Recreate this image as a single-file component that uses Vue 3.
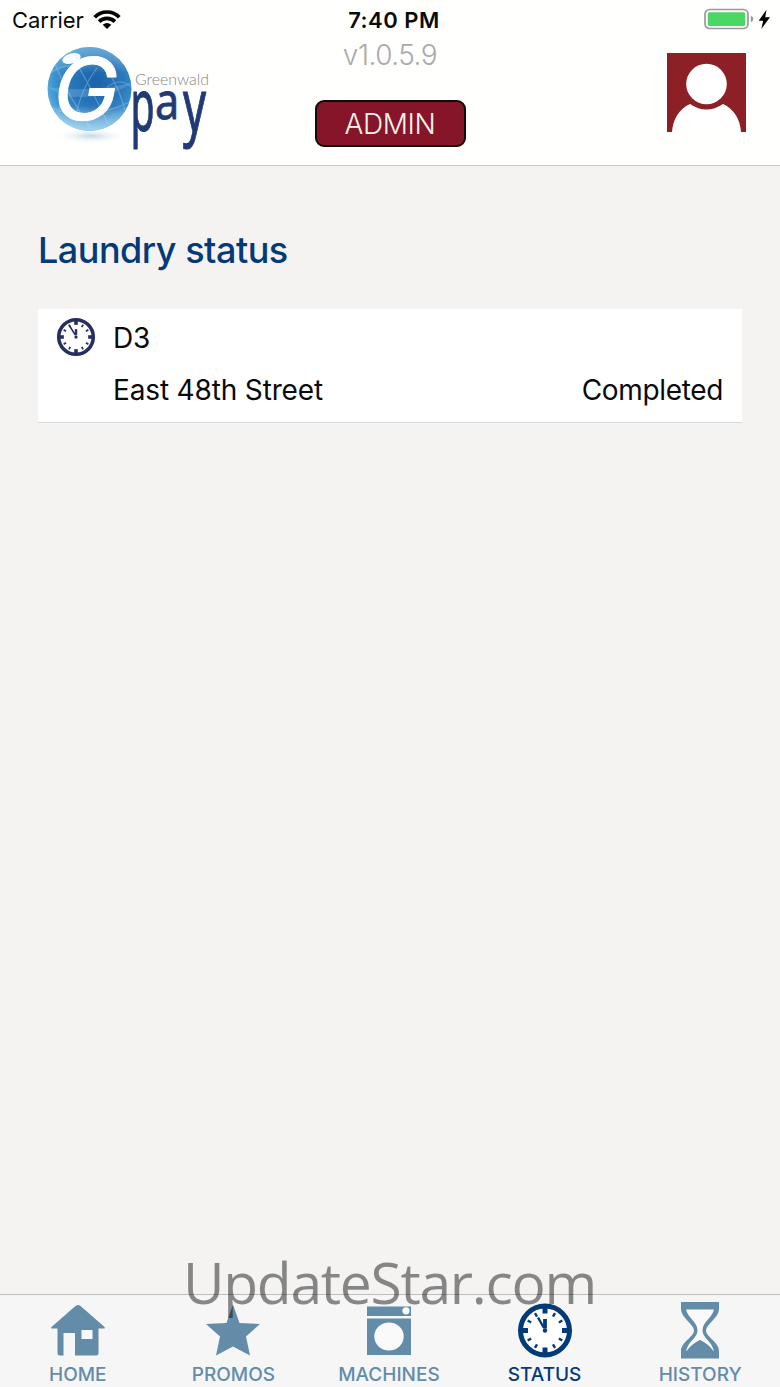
<template>
  <div class="app">
    <header class="header">
      <div class="status-bar">
        <div class="carrier">
          <span>Carrier</span>
          <svg class="wifi" width="28" height="20" viewBox="0 0 28 20">
            <g fill="none" stroke="#000" stroke-width="3.7">
              <path d="M1.7 7.3C8.2 .2 19.8 .2 26.3 7.3" />
              <path d="M6.1 11.6C10.4 7.3 17.6 7.3 21.9 11.6" />
            </g>
            <path d="M9.7 14.8Q14 11.3 18.3 14.8L14 19Z" />
          </svg>
        </div>
        <span class="time">7:40 PM</span>
        <svg class="battery" width="70" height="26" viewBox="0 0 70 26">
          <rect x="1" y="2.5" width="43" height="19" rx="4.5" fill="#fff" stroke="#999" stroke-width="1.7" />
          <rect x="3.8" y="5.2" width="37.4" height="13.8" rx="2" fill="#4bd763" />
          <path d="M46.8 8.7Q49.3 9.5 49.3 12.1T46.8 15.5Z" fill="#999" />
          <path d="M62.5 2.7L54.7 13.7H59.2L57.3 22L66 10.3H61.2Z" />
        </svg>
      </div>

      <div class="header-row">
        <svg class="logo" width="170" height="110" viewBox="0 0 170 110">
          <defs>
            <radialGradient id="globe" cx=".58" cy=".42" r=".62">
              <stop offset="0" stop-color="#1c63a8" />
              <stop offset=".5" stop-color="#2a78bb" />
              <stop offset=".82" stop-color="#3f94cf" />
              <stop offset="1" stop-color="#5fb0dd" />
            </radialGradient>
            <radialGradient id="shade">
              <stop offset="0" stop-color="#a9c6d6" stop-opacity=".7" />
              <stop offset="1" stop-color="#fff" stop-opacity="0" />
            </radialGradient>
            <linearGradient id="shine" x1="0" y1="0" x2="0" y2="1">
              <stop offset="0" stop-color="#9ed5ef" stop-opacity=".45" />
              <stop offset=".3" stop-color="#fff" stop-opacity="0" />
              <stop offset=".7" stop-color="#fff" stop-opacity="0" />
              <stop offset="1" stop-color="#b6e4f6" stop-opacity=".75" />
            </linearGradient>
            <clipPath id="ball"><circle cx="44.5" cy="49" r="42" /></clipPath>
          </defs>
          <ellipse cx="46" cy="96" rx="38" ry="8" fill="url(#shade)" />
          <circle cx="44.5" cy="49" r="42" fill="url(#globe)" />
          <g clip-path="url(#ball)">
            <g fill="none" stroke="#9bd0ee" stroke-width="1.2" opacity=".4">
              <path d="M4 34Q16 25 26 26M8 68Q38 83 85 62M62 47Q75 37 87 47" />
              <path d="M10 24Q23 57 48 91M25 12Q46 47 63 84M50 18Q70 34 80 70M30 20Q16 40 14 73M52 28Q35 50 30 81" />
            </g>
            <path d="M2 47Q40 53 87 43Q61 61 18 56Z" fill="#9fd5f1" opacity=".25" />
            <circle cx="44.5" cy="49" r="42" fill="url(#shine)" />
          </g>
          <ellipse cx="26.5" cy="18.5" rx="9.5" ry="5" fill="#fff" opacity=".95" transform="rotate(-16 26.5 18.5)" />
          <text class="logo-g" transform="translate(4 80) skewX(-10) scale(1.02 1)">G</text>
          <text class="logo-name" x="90" y="45" textLength="74" lengthAdjust="spacingAndGlyphs">Greenwald</text>
          <g class="logo-pay">
            <text transform="translate(85.5 91) scale(.98 1.84)">p</text>
            <text transform="translate(110 78.5) scale(1.08 1.25)">a</text>
            <text transform="translate(138 91) scale(1.13 1.84)">y</text>
          </g>
        </svg>

        <div class="header-center">
          <span class="version">v1.0.5.9</span>
          <button class="admin-btn">ADMIN</button>
        </div>

        <svg class="avatar" width="79" height="79" viewBox="0 0 79 79">
          <rect width="79" height="79" fill="#8d2027" />
          <path d="M5 79C6 66 12 56 23 51Q39.5 62 56 51C67 56 73 66 74 79Z" fill="#fff" />
          <circle cx="39.5" cy="31" r="20.3" fill="#fff" />
        </svg>
      </div>
    </header>

    <main class="content">
      <h1>Laundry status</h1>
      <div v-for="item in machines" :key="item.name" class="card">
        <svg class="card-icon" width="40" height="40" viewBox="0 0 56 56">
          <circle cx="28" cy="28" r="24.2" fill="#fff" stroke="#272f62" stroke-width="5" />
          <g stroke="#272f62">
            <path v-for="t in ticks" :key="t.angle" :d="t.d" :stroke-width="t.width" :transform="`rotate(${t.angle} 28 28)`" />
            <path d="M28 17V25" stroke-width="3.4" />
            <path d="M18.5 11.5L26.8 25" stroke-width="2.2" />
          </g>
          <circle cx="28" cy="28" r="2.3" fill="#272f62" />
        </svg>
        <div class="card-body">
          <div class="name">{{ item.name }}</div>
          <div class="card-line">
            <span class="place">{{ item.place }}</span>
            <span class="state">{{ item.state }}</span>
          </div>
        </div>
      </div>
    </main>

    <nav class="tabs">
      <a v-for="tab in tabs" :key="tab.id" class="tab" :class="{ active: tab.id === current }" @click="current = tab.id">
        <svg width="56" height="60" viewBox="0 0 56 60" fill="currentColor">
          <template v-if="tab.id === 'home'">
            <path d="M2 26.5Q0 26.5 2 24.5L25.5 4Q28 2 30.5 4L54 24.5Q56 26.5 53.5 26.5H48.5V51Q48.5 53.5 46 53.5H25V31H13.5V53.5H10Q7.5 53.5 7.5 51V26.5Z" />
            <path d="M31.5 28H42.5V37H31.5Z" class="hole" />
          </template>
          <path v-else-if="tab.id === 'promos'" d="M28 2.5L34.5 21L55 22L41 34.5L45 53.5L28 44.5L11 53.5L15 34.5L1 22L21.5 21Z" />
          <template v-else-if="tab.id === 'machines'">
            <path d="M6 4.5H50V14H6ZM6 16.5H50V53H6Z" />
            <ellipse cx="28" cy="34.5" rx="14.7" ry="14" class="hole" />
            <circle cx="45" cy="8.8" r="3.6" class="hole" />
          </template>
          <template v-else-if="tab.id === 'status'">
            <circle cx="28" cy="28.5" r="24.5" fill="#fff" stroke="currentColor" stroke-width="5" />
            <g stroke="currentColor" transform="translate(0 .5)">
              <path v-for="t in ticks" :key="t.angle" :d="t.d" :stroke-width="t.width" :transform="`rotate(${t.angle} 28 28)`" />
              <path d="M28 16.5V26" stroke-width="3.8" />
              <path d="M21 15L26.7 25" stroke-width="2.4" />
            </g>
            <circle cx="28" cy="28.5" r="2.2" />
          </template>
          <template v-else>
            <path d="M9 0H47V7C47 16 34 22 34 28.5S47 40 47 49V56.5H9V49C9 40 22 35 22 28.5S9 16 9 7Z" />
            <path d="M14 7.5H42C40 16 30.5 20 30.5 28.5C30.5 36 40 39 42 49.5L28 38L14 49.5C16 39 25.5 36 25.5 28.5C25.5 20 16 16 14 7.5Z" class="hole" />
            <path d="M14 50Q19 42 28 38Q37 42 42 50Z" />
          </template>
        </svg>
        <span>{{ tab.label }}</span>
      </a>
    </nav>

    <div class="watermark">UpdateStar.com</div>
  </div>
</template>

<script setup>
import { ref } from 'vue'

const current = ref('status')

const machines = [
  { name: 'D3', place: 'East 48th Street', state: 'Completed' }
]

const tabs = [
  { id: 'home', label: 'HOME' },
  { id: 'promos', label: 'PROMOS' },
  { id: 'machines', label: 'MACHINES' },
  { id: 'status', label: 'STATUS' },
  { id: 'history', label: 'HISTORY' }
]

// every third mark on the dial is a thick one joined to the rim
const ticks = Array.from({ length: 12 }, (_, i) => ({
  angle: i * 30,
  d: i % 3 === 0 ? 'M28 4V11' : 'M28 8V12',
  width: i % 3 === 0 ? 5 : 2.4
}))
</script>

<style>
body {
  margin: 0;
}
</style>

<style scoped>
.app {
  position: relative;
  display: flex;
  flex-direction: column;
  width: 780px;
  height: 1387px;
  overflow: hidden;
  background: #f4f3f2;
  color: #0a0a0a;
  font-family: Inter, "Liberation Sans", sans-serif;
}

.header {
  box-sizing: border-box;
  height: 166px;
  background: #fffffe;
  border-bottom: 1.5px solid #c9c9c9;
}

.status-bar {
  display: grid;
  grid-template-columns: 1fr auto 1fr;
  align-items: center;
  height: 40px;
  padding: 0 6px 0 12px;
  font-size: 22px;
}

.carrier {
  display: flex;
  align-items: center;
  gap: 9px;
  letter-spacing: -0.05px;
}

.wifi {
  margin-top: -1px;
}

.time {
  font-weight: 600;
  letter-spacing: 0.5px;
  margin-left: 2px;
}

.battery {
  justify-self: end;
}

.header-row {
  display: grid;
  grid-template-columns: 1fr auto 1fr;
  padding: 0 34px 0 45px;
}

.logo {
  overflow: visible;
}

.header-center {
  display: flex;
  flex-direction: column;
  align-items: center;
  margin-left: -11px;
}

.version {
  height: 30px;
  line-height: 31px;
  font-size: 28px;
  font-weight: 300;
  letter-spacing: -0.5px;
  color: #aaa;
}

.admin-btn {
  box-sizing: border-box;
  width: 151px;
  height: 47px;
  margin-top: 30px;
  padding: 0;
  border: 2px solid #16070a;
  border-radius: 9px;
  background: #871529;
  color: #fff4ee;
  font-family: inherit;
  font-size: 28px;
  font-weight: 300;
  letter-spacing: -0.4px;
}

.avatar {
  justify-self: end;
  margin-top: 13px;
}

.logo-g {
  font-family: Inter, sans-serif;
  font-size: 86px;
  font-weight: 400;
  fill: #fff;
  stroke: #fff;
  stroke-width: 1;
  stroke-linejoin: round;
}

.logo-name {
  font-family: Lato, sans-serif;
  font-size: 15px;
  font-weight: 300;
  fill: #888;
}

.logo-pay {
  font-family: "Noto Sans", sans-serif;
  font-size: 40px;
  fill: #203a77;
  stroke: #203a77;
  stroke-width: 0.6;
  stroke-linejoin: round;
}

.content {
  flex: 1;
  padding: 60px 38px 0;
}

h1 {
  margin: 0 0 35px;
  height: 48px;
  line-height: 48px;
  font-size: 36px;
  font-weight: 500;
  letter-spacing: -0.5px;
  color: #043a78;
}

.card {
  display: flex;
  box-sizing: border-box;
  height: 114px;
  padding: 8px 19px 0 18px;
  background: #fff;
  border-bottom: 1px solid #d8d8d8;
}

.card-body {
  flex: 1;
  margin-left: 17px;
  font-size: 28px;
  letter-spacing: -0.15px;
}

.name {
  height: 42px;
  line-height: 42px;
}

.card-line {
  display: flex;
  justify-content: space-between;
  height: 42px;
  margin-top: 10px;
  line-height: 42px;
}

.state {
  letter-spacing: -0.35px;
}

.tabs {
  display: grid;
  grid-template-columns: repeat(5, 1fr);
  box-sizing: border-box;
  height: 93px;
  padding-right: 2px;
  border-top: 1.5px solid #bebebe;
  background: #f7f6f7;
}

.tab {
  display: flex;
  flex-direction: column;
  align-items: center;
  padding-top: 7px;
  color: #628ca8;
  font-size: 19px;
  font-weight: 500;
  line-height: 25px;
}

.tab.active {
  color: #033a78;
}

.hole {
  fill: #fbfafb;
}

.watermark {
  position: absolute;
  top: 1243px;
  left: 183px;
  line-height: 78px;
  font-family: "Open Sans", sans-serif;
  font-size: 57px;
  letter-spacing: -1.3px;
  color: rgba(0, 0, 0, 0.45);
  white-space: nowrap;
  pointer-events: none;
}
</style>
